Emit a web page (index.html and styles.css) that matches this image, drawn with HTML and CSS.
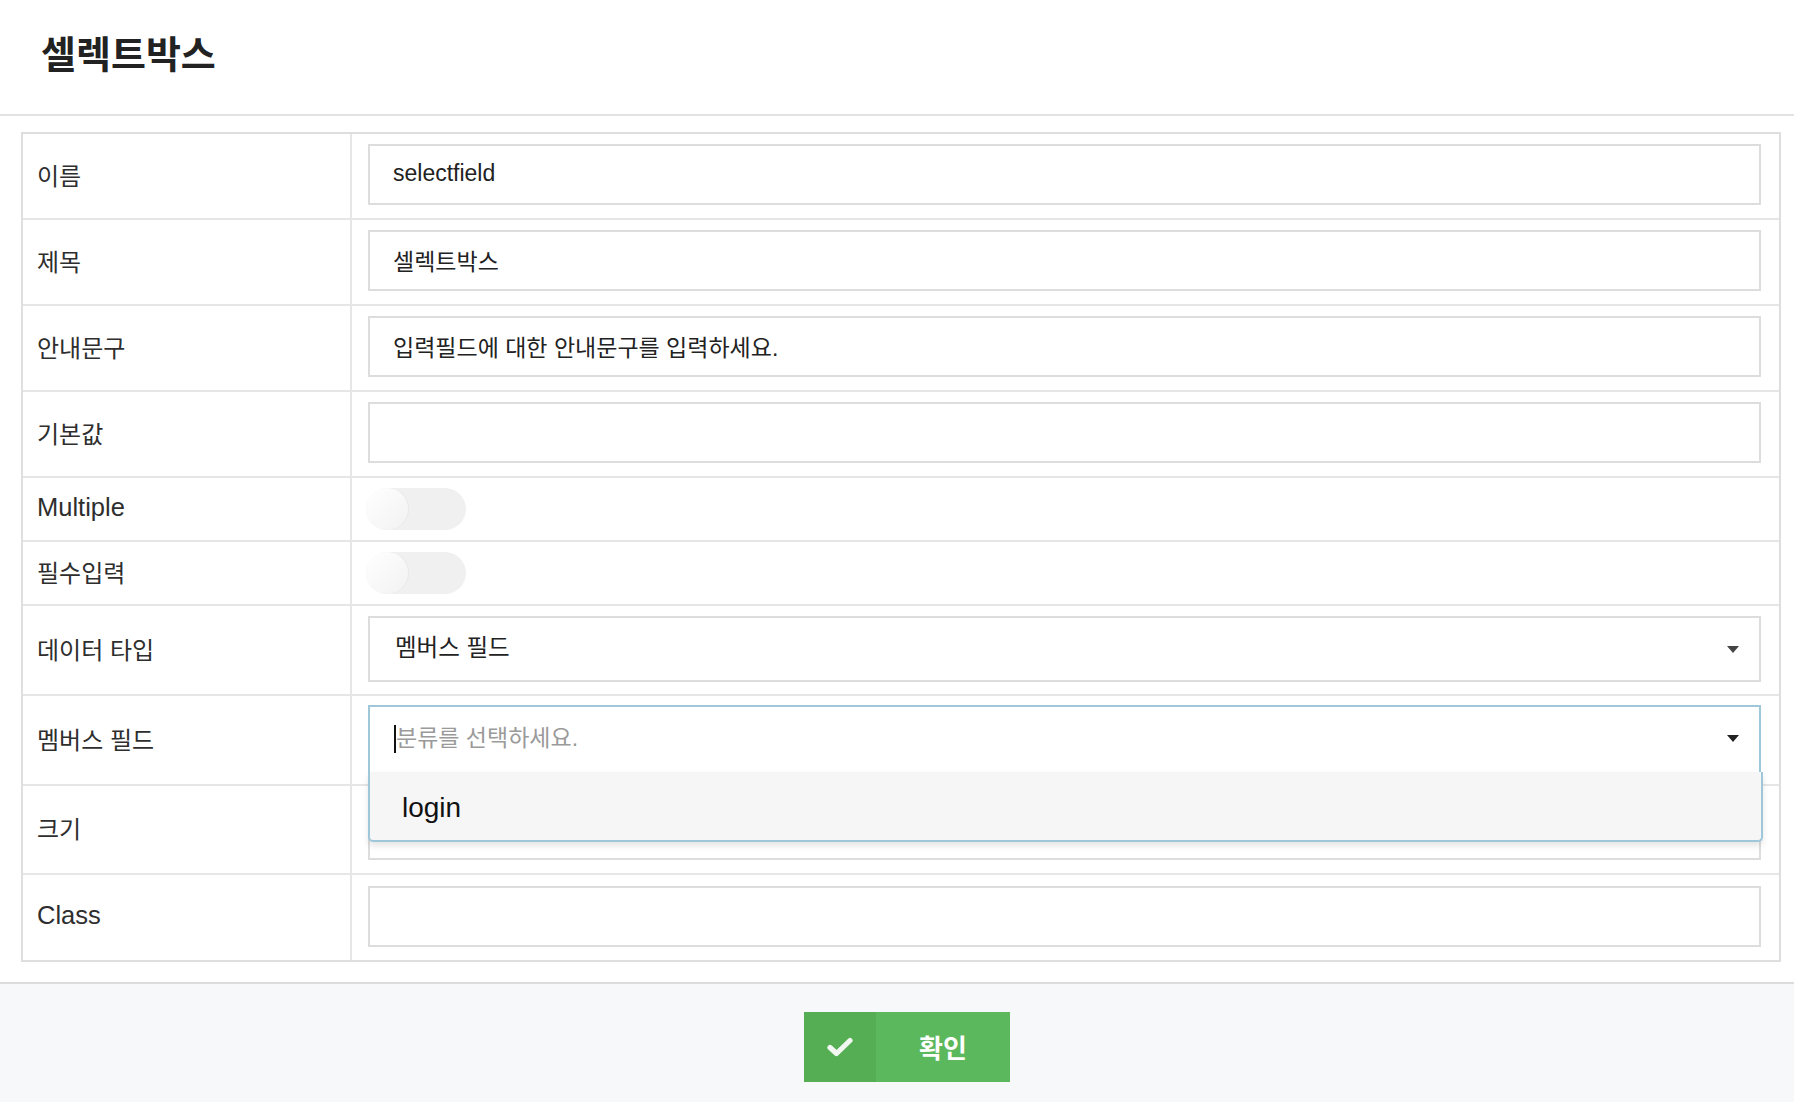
FILE: index.html
```html
<!DOCTYPE html>
<html lang="ko">
<head>
<meta charset="utf-8">
<title>셀렉트박스</title>
<link rel="stylesheet" href="styles.css">
</head>
<body>
<header class="page-header">
  <h1 class="page-title">셀렉트박스</h1>
</header>
<main class="content">
  <div class="form-table">
    <div class="row row-text">
      <div class="label">이름</div>
      <div class="field"><div class="input">selectfield</div></div>
    </div>
    <div class="row row-text">
      <div class="label">제목</div>
      <div class="field"><div class="input">셀렉트박스</div></div>
    </div>
    <div class="row row-text">
      <div class="label">안내문구</div>
      <div class="field"><div class="input">입력필드에 대한 안내문구를 입력하세요.</div></div>
    </div>
    <div class="row row-text">
      <div class="label">기본값</div>
      <div class="field"><div class="input"></div></div>
    </div>
    <div class="row row-toggle">
      <div class="label"><span class="latin">Multiple</span></div>
      <div class="field"><div class="toggle"><span class="knob"></span></div></div>
    </div>
    <div class="row row-toggle">
      <div class="label">필수입력</div>
      <div class="field"><div class="toggle"><span class="knob"></span></div></div>
    </div>
    <div class="row row-select">
      <div class="label">데이터 타입</div>
      <div class="field">
        <div class="select"><span class="select-value">멤버스 필드</span><span class="caret"></span></div>
      </div>
    </div>
    <div class="row row-select row-top">
      <div class="label">멤버스 필드</div>
      <div class="field field-open">
        <div class="select select-open">
          <span class="cursor"></span><span class="placeholder">분류를 선택하세요.</span><span class="caret caret-dark"></span>
          <div class="menu"><div class="menu-item">login</div></div>
        </div>
      </div>
    </div>
    <div class="row row-size">
      <div class="label">크기</div>
      <div class="field"><div class="input"></div></div>
    </div>
    <div class="row row-text row-last">
      <div class="label"><span class="latin">Class</span></div>
      <div class="field"><div class="input"></div></div>
    </div>
  </div>
</main>
<footer class="page-footer">
  <button class="btn-ok" type="button">
    <span class="btn-icon">
      <svg width="26" height="20" viewBox="0 0 26 20"><path d="M3 10.5 L9.5 16.5 L23 3.5" fill="none" stroke="#f2f8f1" stroke-width="5.2" stroke-linecap="round" stroke-linejoin="round"/></svg>
    </span>
    <span class="btn-text">확인</span>
  </button>
</footer>
</body>
</html>
```

FILE: styles.css
```css
* { box-sizing: border-box; }

html, body {
  margin: 0;
  padding: 0;
  background: #ffffff;
}

body {
  width: 1794px;
  height: 1102px;
  overflow: hidden;
  font-family: "Liberation Sans", "Noto Sans CJK KR", sans-serif;
  color: #2b2b2b;
  display: flex;
  flex-direction: column;
}

.page-header {
  height: 116px;
  border-bottom: 2px solid #e2e2e2;
  display: flex;
  align-items: center;
  padding: 0 0 12px 41px;
}

.page-title {
  margin: 0;
  font-family: "Noto Sans CJK KR", sans-serif;
  font-size: 38px;
  font-weight: 700;
  color: #222;
  letter-spacing: 0;
}

.content {
  padding: 16px 13px 20px 21px;
}

.form-table {
  border: 2px solid #dedede;
}

.row {
  display: flex;
  border-bottom: 2px solid #e6e6e6;
}

.row-last { border-bottom: none; }

.row-text { height: 86px; }
.row-toggle { height: 64px; }
.row-select { height: 90px; }
.row-size { height: 89px; }
.row-last { height: 85px; }

.row-top { position: relative; z-index: 2; }

.label {
  width: 329px;
  flex: none;
  border-right: 2px solid #e6e6e6;
  padding: 0 0 4px 14px;
  display: flex;
  align-items: center;
  font-size: 24px;
  color: #2e2e2e;
}

.latin {
  font-size: 25.5px;
}

.field {
  flex: 1;
  padding: 0 18px 3px 16px;
  display: flex;
  align-items: center;
}

.input {
  width: 100%;
  height: 61px;
  border: 2px solid #dddddd;
  background: #fff;
  display: flex;
  align-items: center;
  padding: 0 0 2px 23px;
  font-size: 23px;
  color: #222;
}

.row-size .field { align-items: flex-start; padding-top: 13px; }

.toggle {
  width: 100px;
  height: 42px;
  border-radius: 21px;
  background: #f0f0f0;
  position: relative;
  margin-left: -2px;
  margin-top: 2px;
}

.knob {
  position: absolute;
  left: 0;
  top: 0;
  width: 42px;
  height: 42px;
  border-radius: 50%;
  background: linear-gradient(135deg, #ffffff 0%, #f7f7f7 60%, #f2f2f2 100%);
  box-shadow: 1px 0 1px rgba(0, 0, 0, 0.04);
}

.select {
  width: 100%;
  height: 66px;
  border: 2px solid #dddddd;
  background: #fff;
  display: flex;
  align-items: center;
  padding: 0 20px 0 25px;
  position: relative;
}

.select-value {
  flex: 1;
  font-size: 23.5px;
  color: #222;
  padding-bottom: 6px;
}

.caret {
  width: 0;
  height: 0;
  border-left: 6px solid transparent;
  border-right: 6px solid transparent;
  border-top: 7px solid #444;
  margin-top: 2px;
}

.caret-dark { border-top-color: #222; margin-top: 0; margin-bottom: 2px; }

.field-open {
  align-items: flex-start;
  padding-top: 9px;
  padding-bottom: 0;
}

.select-open {
  height: 67px;
  border: 2px solid #9ec7da;
  border-bottom: none;
  padding-left: 24px;
}

.cursor {
  width: 2px;
  height: 28px;
  background: #111;
  margin-bottom: 2px;
}

.placeholder {
  flex: 1;
  font-size: 23px;
  color: #9a9a9a;
  padding-bottom: 7px;
}

.menu {
  position: absolute;
  left: -2px;
  right: -4px;
  top: 65px;
  height: 70px;
  background: #f6f6f6;
  border: 2px solid #9ec7da;
  border-top: none;
  border-radius: 0 0 5px 5px;
  box-shadow: 0 4px 6px rgba(0, 0, 0, 0.10);
  display: flex;
  align-items: center;
  padding-left: 32px;
}

.menu-item {
  font-size: 28px;
  color: #111;
  padding-top: 4px;
}

.page-footer {
  flex: 1;
  border-top: 2px solid #dcdcdc;
  background: #f7f8fa;
  display: flex;
  justify-content: center;
  align-items: flex-start;
  padding: 28px 0 0 20px;
}

.btn-ok {
  width: 206px;
  height: 70px;
  border: none;
  padding: 0;
  margin: 0;
  background: #5cb85c;
  display: flex;
  align-items: stretch;
  cursor: pointer;
  font-family: "Noto Sans CJK KR", sans-serif;
}

.btn-icon {
  width: 72px;
  flex: none;
  background: #55ae54;
  display: flex;
  align-items: center;
  justify-content: center;
}

.btn-text {
  flex: 1;
  display: flex;
  align-items: center;
  justify-content: center;
  color: #ffffff;
  font-size: 26px;
  font-weight: 700;
  padding-bottom: 2px;
}
```
